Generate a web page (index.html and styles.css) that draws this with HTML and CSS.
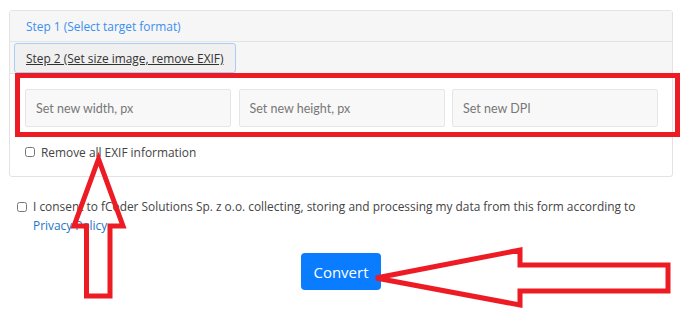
FILE: index.html
```html
<!DOCTYPE html>
<html>
<head>
<meta charset="utf-8">
<link rel="stylesheet" href="styles.css">
</head>
<body>
<div class="page">
  <div class="card">
    <div class="card-header">
      <a class="step-link" href="#">Step 1 (Select target format)</a>
    </div>
    <div class="card-header header-two">
      <button class="step-btn">Step 2 (Set size image, remove EXIF)</button>
    </div>
    <div class="card-body">
      <div class="inputs">
        <input class="field" type="text" placeholder="Set new width, px">
        <input class="field" type="text" placeholder="Set new height, px">
        <input class="field" type="text" placeholder="Set new DPI">
      </div>
      <label class="check">
        <input type="checkbox">
        <span>Remove all EXIF information</span>
      </label>
    </div>
  </div>
  <label class="consent">
    <input type="checkbox">
    <span>I consent to fCoder Solutions Sp. z o.o. collecting, storing and processing my data from this form according to <a href="#" class="policy">Privacy Policy</a>.</span>
  </label>
  <div class="actions">
    <button class="convert">Convert</button>
  </div>
</div>
<svg class="annot" width="690" height="309" viewBox="0 0 690 309">
  <rect x="17.5" y="75.5" width="660" height="59" fill="none" stroke="#ed1c24" stroke-width="5"/>
  <polygon points="98.5,159 74,226 86.5,226 86.5,296 110,296 110,226 123,226" fill="none" stroke="#ed1c24" stroke-width="5" stroke-linejoin="miter"/>
  <polygon points="376,278 520,250 520,265 668,265 668,291 520,291 520,305" fill="none" stroke="#ed1c24" stroke-width="5" stroke-linejoin="miter"/>
</svg>
</body>
</html>
```
FILE: styles.css
```css
html, body {
  margin: 0;
  padding: 0;
  background: #fff;
}
body {
  font-family: "Open Sans", "Noto Sans", sans-serif;
  font-size: 11.9px;
  color: #444;
  position: relative;
  width: 690px;
  height: 309px;
  overflow: hidden;
}
.page {
  width: 664px;
  padding: 10px 0 0 9px;
}
.card {
  border: 1px solid #e3e3e3;
  border-radius: 3px;
  background: #fff;
}
.card-header {
  background: #f6f6f6;
  border-bottom: 1px solid #e3e3e3;
  height: 30px;
  display: flex;
  align-items: center;
  padding-left: 16px;
}
.header-two {
  padding: 1px 0 0 4px;
  height: 30px;
  align-items: stretch;
}
.step-link {
  color: #3b8ff0;
  text-decoration: none;
}
.step-btn {
  font: inherit;
  color: #333;
  text-decoration: underline;
  background: #f0f0f0;
  border: 1px solid #a9cdf5;
  border-radius: 3px;
  padding: 0 11px;
  width: 222px;
  text-align: left;
  white-space: nowrap;
}
.card-body {
  padding: 15px 14px 14px 15px;
}
.inputs {
  display: grid;
  grid-template-columns: 206px 206px 206px;
  column-gap: 7.5px;
}
.field {
  box-sizing: border-box;
  height: 38px;
  background: #f8f8f8;
  border: 1px solid #e6e6e6;
  border-radius: 2px;
  padding: 0 10px;
  font-family: "Lato", sans-serif;
  font-size: 12.5px;
  color: #555;
  outline: none;
}
.field::placeholder {
  color: #777;
}
.check {
  display: flex;
  align-items: center;
  margin-top: 15px;
  height: 20px;
}
.check input, .consent input {
  margin: 0;
  width: 10px;
  height: 10px;
}
.check span {
  margin-left: 6px;
}
.consent {
  display: flex;
  align-items: flex-start;
  margin: 20px 0 0 8px;
  line-height: 19px;
}
.consent input {
  margin-top: 5px;
  flex: none;
}
.consent span {
  margin-left: 6px;
}
.policy {
  color: #1a76c9;
  text-decoration: none;
}
.actions {
  display: flex;
  justify-content: center;
  margin-top: 18px;
}
.convert {
  font-family: "Open Sans", sans-serif;
  font-size: 15px;
  color: #fff;
  background: #0a7cff;
  border: none;
  border-radius: 4px;
  width: 80px;
  height: 37px;
}
.annot {
  position: absolute;
  left: 0;
  top: 0;
  pointer-events: none;
}
```
